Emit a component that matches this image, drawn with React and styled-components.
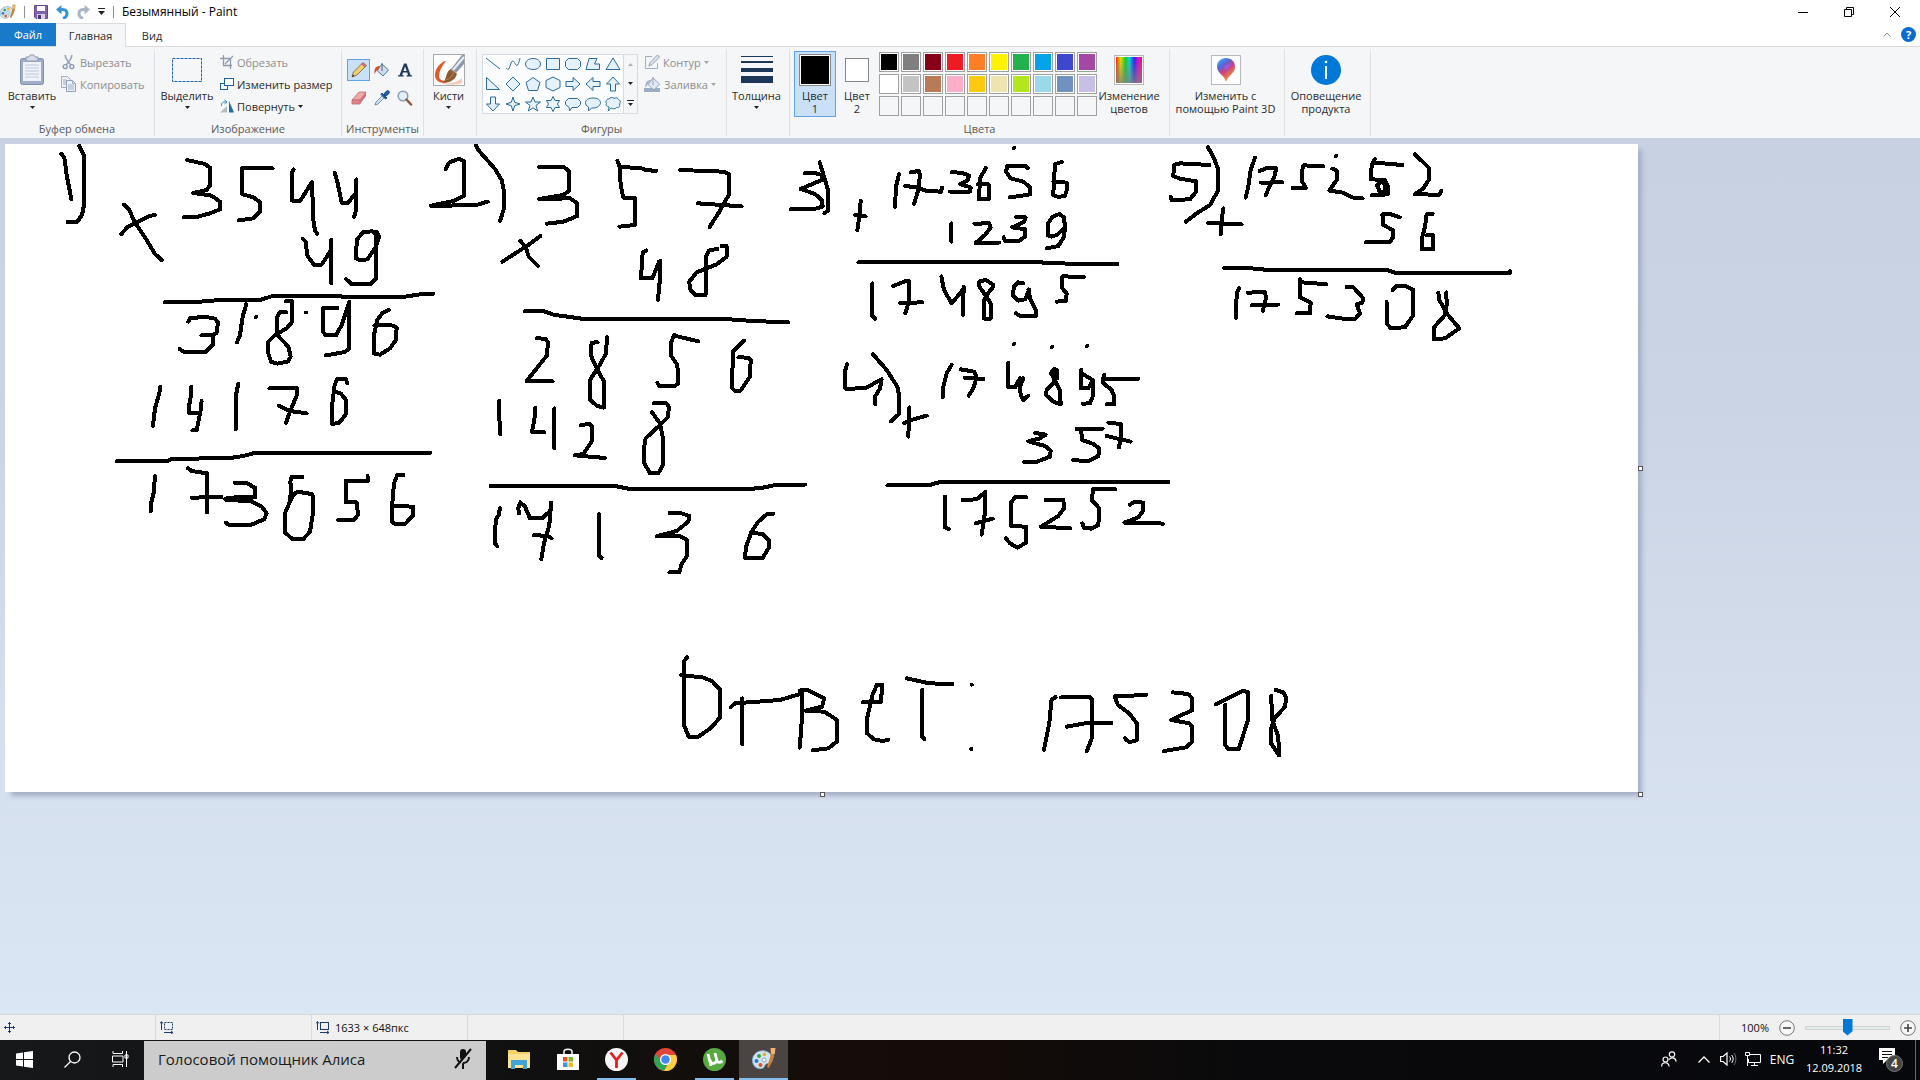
import React from "react";
import styled, { createGlobalStyle, css } from "styled-components";

const GlobalStyle = createGlobalStyle`
  *, *::before, *::after { box-sizing: border-box; }
  html, body, #root { height: 100%; margin: 0; }
  body {
    overflow: hidden;
    font-family: "Open Sans", "Noto Sans", sans-serif;
    font-size: 11px;
    line-height: 13px;
    color: #2b2b2b;
  }
  button, input { font: inherit; color: inherit; }
  button { padding: 0; border: 0; background: none; white-space: nowrap; }
  svg { display: block; flex: none; }
`;

/* ---------- window frame ---------- */

const Window = styled.div`
  display: flex;
  flex-direction: column;
  height: 100vh;
  background: #fff;
`;

const TitleBar = styled.header`
  display: flex;
  align-items: center;
  height: 23px;
  padding-right: 2px;
  background: #fff;
`;

const QuickAccess = styled.div`
  display: flex;
  align-items: center;
  gap: 8px;
`;

const QuickButton = styled.button`
  display: grid;
  place-items: center;
`;

const Divider = styled.span`
  width: 1px;
  height: 12px;
  margin-right: 1px;
  background: #8f8f8f;
`;

const Title = styled.h1`
  margin: 0 0 0 7px;
  flex: 1;
  font-size: 12px;
  font-weight: 400;
  color: #000;
`;

const WindowButton = styled.button`
  display: grid;
  place-items: center;
  width: 46px;
  height: 20px;
`;

const TabRow = styled.nav`
  display: flex;
  height: 24px;
  border-bottom: 1px solid #dadbdc;
`;

const Tab = styled.button`
  width: ${(p) => p.$width}px;
  height: 24px;
  ${(p) =>
    p.$kind === "file" &&
    css`
      height: 23px;
      background: #1979ca;
      color: #fff;
    `}
  ${(p) =>
    p.$kind === "current" &&
    css`
      background: #f5f6f7;
      border: solid #dadbdc;
      border-width: 1px 1px 0 0;
    `}
`;

const TabTools = styled.div`
  display: flex;
  align-items: center;
  gap: 10px;
  margin-left: auto;
  padding-right: 4px;
`;

/* ---------- ribbon ---------- */

const Ribbon = styled.div`
  display: flex;
  height: 91px;
  padding: 2px 0;
  background: #f5f6f7;
`;

const Group = styled.section`
  display: flex;
  flex-direction: column;
  justify-content: space-between;
  width: ${(p) => p.$width}px;
  border-right: 1px solid #e0e1e3;
`;

const GroupBody = styled.div`
  display: flex;
  gap: ${(p) => p.$gap || 0}px;
  padding: 2px ${(p) => p.$pad || 0}px 0;
  ${(p) =>
    p.$center &&
    css`
      justify-content: center;
      padding-right: 3px;
    `}
`;

const GroupName = styled.h2`
  margin: 0 0 1px;
  font-size: 11px;
  font-weight: 400;
  line-height: 13px;
  text-align: center;
  color: #5a5a5a;
`;

const BigButton = styled.button`
  display: flex;
  flex-direction: column;
  align-items: center;
  width: ${(p) => p.$width}px;
  height: 66px;
  padding-top: 1px;
  border: 1px solid ${(p) => (p.$on ? "#62a2e4" : "transparent")};
  background: ${(p) => (p.$on ? "#c9e0f7" : "transparent")};
  & > svg { margin-top: 4px; }
`;

const BigIcon = styled.span`
  display: grid;
  flex: none;
  place-items: center;
  height: 34px;
  margin-bottom: 2px;
`;

const BigText = styled.span`
  flex: none;
  line-height: 13px;
  white-space: pre;
`;

const Rows = styled.div`
  display: flex;
  flex-direction: column;
  margin-left: ${(p) => p.$indent || 0}px;
`;

const RowButton = styled.button`
  display: flex;
  align-items: center;
  gap: 3px;
  height: 22px;
  color: ${(p) => (p.disabled ? "#8d8d8d" : "#2b2b2b")};
`;

const ToolGrid = styled.div`
  display: grid;
  grid-template-columns: repeat(3, 23px);
  grid-auto-rows: 22px;
  row-gap: 6px;
  padding-top: 8px;
`;

const ToolButton = styled.button`
  display: grid;
  place-items: center;
  border: 1px solid ${(p) => (p.$on ? "#62a2e4" : "transparent")};
  background: ${(p) => (p.$on ? "#c9e0f7" : "transparent")};
`;

const ShapeBox = styled.div`
  display: flex;
  height: 60px;
  margin-top: 3px;
  border: 1px solid #d5dbe2;
  background: #fbfcfd;
`;

const ShapeGrid = styled.div`
  display: grid;
  grid-template-columns: repeat(7, 20px);
  grid-auto-rows: 20px;
  align-content: center;
`;

const ShapeScroll = styled.div`
  display: grid;
  grid-template-rows: repeat(3, 1fr);
  width: 14px;
  border-left: 1px solid #d5dbe2;
  background: #f5f6f7;
`;

const CellButton = styled.button`
  display: grid;
  place-items: center;
`;

const Chip = styled.span`
  width: ${(p) => p.$size}px;
  height: ${(p) => p.$size}px;
  border: 1px solid #868686;
  background: ${(p) => p.$color};
  box-shadow: inset 0 0 0 1px #fff;
`;

const Palette = styled.div`
  display: grid;
  grid-template-columns: repeat(10, 20px);
  grid-auto-rows: 20px;
  gap: 2px;
  padding: 1px 0 0 1px;
`;

const Swatch = styled.button`
  border: 1px solid #a0a0a0;
  background: ${(p) => p.$color || "#f5f6f7"};
  box-shadow: ${(p) => (p.$color ? "inset 0 0 0 1px #fff" : "none")};
`;

const FramedPicture = styled.span`
  display: grid;
  place-items: center;
  width: 30px;
  height: 30px;
  border: 1px solid #b9b9b9;
  background: #fff;
`;

const Spectrum = styled.span`
  width: 26px;
  height: 26px;
  background: linear-gradient(to bottom, transparent, #808080cc),
    linear-gradient(to right, #ff2a00, #e8e000 18%, #12d020 36%, #00d8d8 52%, #2020f0 70%, #e000e0 85%, #ff1040);
`;

/* ---------- work area ---------- */

const WorkArea = styled.main`
  flex: 1;
  min-height: 0;
  overflow: hidden;
  padding: 6px 0 0 5px;
  background: linear-gradient(#c8d1e1, #cad4e4 30%, #d5dfee 70%, #dbe6f4);
`;

const Sheet = styled.div`
  position: relative;
  width: 1633px;
  background: #fff;
  box-shadow: 5px 5px 5px -1px #a5afc4;
`;

const Handle = styled.span`
  position: absolute;
  left: ${(p) => p.$left};
  top: ${(p) => p.$top};
  width: 5px;
  height: 5px;
  border: 1px solid #555;
  background: #fff;
`;

/* ---------- status bar ---------- */

const StatusBar = styled.footer`
  display: flex;
  align-items: stretch;
  height: 26px;
  border-top: 1px solid #d7d7d7;
  background: #f0f0f0;
  color: #111;
`;

const StatusCell = styled.div`
  display: flex;
  align-items: center;
  gap: 5px;
  width: ${(p) => p.$width}px;
  padding-left: 4px;
  border-right: 1px solid #d9d9d9;
`;

const Zoom = styled.div`
  display: flex;
  align-items: center;
  gap: 10px;
  margin-left: auto;
  padding: 0 4px 0 21px;
  border-left: 1px solid #d9d9d9;
`;

const ZoomTrack = styled.input`
  appearance: none;
  width: 85px;
  height: 16px;
  margin: 0;
  background: transparent;
  &::-webkit-slider-runnable-track {
    height: 4px;
    border: 1px solid #d0d6d6;
    background: #e7eaea;
  }
  &::-webkit-slider-thumb {
    appearance: none;
    width: 10px;
    height: 17px;
    margin-top: -8px;
    background: #0078d7;
    clip-path: polygon(0 0, 100% 0, 100% 75%, 50% 100%, 0 75%);
  }
`;

/* ---------- taskbar ---------- */

const Taskbar = styled.div`
  display: flex;
  height: 40px;
  background: linear-gradient(90deg, #16181a, #101010 28%, #140d09 42%, #140c08 50%, #0a0a0c 65%, #07080c);
  color: #fff;
`;

const TaskButton = styled.button`
  position: relative;
  display: grid;
  place-items: center;
  width: ${(p) => p.$width || 49}px;
  height: 40px;
  padding-bottom: 2px;
  background: ${(p) => (p.$on ? "#4a4443" : "transparent")};
  ${(p) =>
    p.$open &&
    css`
      &::after {
        content: "";
        position: absolute;
        bottom: 0;
        left: ${p.$on ? 0 : 5}px;
        right: ${p.$on ? 0 : 5}px;
        height: 2px;
        background: #84bdec;
      }
    `}
`;

const Search = styled.label`
  display: flex;
  align-items: center;
  width: 342px;
  margin: 1px 8px 0 0;
  padding: 0 14px 3px 14px;
  background: #ccc;
`;

const SearchInput = styled.input`
  flex: 1;
  min-width: 0;
  padding: 0;
  border: 0;
  outline: 0;
  background: none;
  font-size: 15px;
  &::placeholder { color: #1b1b1b; opacity: 1; }
`;

const Language = styled.span`
  font-size: 12px;
`;

const Tray = styled.div`
  display: flex;
  align-items: center;
  margin-left: auto;
`;

const Clock = styled.div`
  width: 76px;
  padding: 0 4px 2px 0;
  text-align: center;
  line-height: 18px;
`;

const TrayEdge = styled.span`
  width: 5px;
  height: 40px;
  margin-left: 8px;
  border-left: 1px solid #666;
`;

/* ---------- icons ---------- */

const Svg = ({ w = 16, h = w, vw = w, vh = h, children, ...rest }) => (
  <svg width={w} height={h} viewBox={`0 0 ${vw} ${vh}`} fill="none" aria-hidden="true" {...rest}>
    {children}
  </svg>
);

const Arrow = ({ color = "#222" }) => (
  <Svg w={5} h={3}>
    <path d="M0 0h5L2.500 3z" fill={color} />
  </Svg>
);

const PaintIcon = ({ size = 16 }) => (
  <Svg w={size} vw={24} vh={24}>
    <path d="M13 4C6 2.500 0 7.500 .5 14c.4 6 5.500 8.500 9.500 7.500 3-.8 2-3 4-4.500 2-1.300 5 .5 6-3C21 9 18 5 13 4z" fill="#cfe3f1" stroke="#7fa9c6" />
    <circle cx="7" cy="9" r="2" fill="#3f9b44" />
    <circle cx="12.500" cy="7.500" r="1.800" fill="#e2b02b" />
    <circle cx="4.500" cy="14" r="2" fill="#2e76c4" />
    <circle cx="8.500" cy="18" r="2" fill="#d5532e" />
    <circle cx="12" cy="13" r="2" fill="#fff" stroke="#7fa9c6" />
    <path d="M19 1h4l-1 9-5 11-2-1 3.500-11z" fill="#c9803a" />
    <path d="M18.500 1h5l-.7 6h-3.600z" fill="#f0b66c" />
  </Svg>
);

const SaveIcon = () => (
  <Svg w={14} h={14}>
    <path d="M.5.500h13v13H2L.5 12z" fill="#8263ad" stroke="#65478f" />
    <path d="M3 1h8v5H3z" fill="#fff" />
    <path d="M3 9h8v5H3z" fill="#d8d0e4" />
    <path d="M4 10h3v4H4z" fill="#4e3675" />
  </Svg>
);

const UndoIcon = ({ color, flip }) => (
  <Svg w={13} h={14}>
    <g transform={flip ? "translate(13 0) scale(-1 1)" : undefined}>
      <path d="M3 5c4.500-1 8-.5 8 3.500 0 2.500-1.500 4-4 5" stroke={color} strokeWidth="3" />
      <path d="M0 4.500 5.500 0v9.500z" fill={color} />
    </g>
  </Svg>
);

const PasteIcon = () => (
  <Svg w={26} h={32}>
    <rect x="1.500" y="4.500" width="23" height="26" rx="2" fill="#9eacc5" stroke="#8190ad" />
    <path d="M4 8h18v19H4z" fill="#eff3f9" />
    <path d="M6 11h14M6 14h14M6 17h14M6 20h14M6 23h14" stroke="#bdc9dc" />
    <path d="M7 3h3c0-3 6-3 6 0h3v4H7z" fill="#d6dde8" stroke="#8998b3" />
  </Svg>
);

const CutIcon = () => (
  <Svg w={17} h={16}>
    <path d="M5 1c1 5 3 7 6 10M12 1c-1 5-3 7-6 10" stroke="#98a6bf" strokeWidth="1.600" />
    <circle cx="5.200" cy="12.600" r="2" stroke="#8797b5" strokeWidth="1.300" />
    <circle cx="11.800" cy="12.600" r="2" stroke="#8797b5" strokeWidth="1.300" />
  </Svg>
);

const CopyIcon = () => (
  <Svg w={17} h={16}>
    <path d="M1.500.500h6l3 3v8h-9z" fill="#eef2f8" stroke="#9fadc5" />
    <path d="M6.500 4.500h6l3 3v8h-9z" fill="#eef2f8" stroke="#8f9fbb" />
    <path d="M12.500 4.500v3h3M3 4h3M3 6h3M3 8h3M8 9h6M8 11h6M8 13h6" stroke="#9fadc5" />
  </Svg>
);

const SelectIcon = () => (
  <Svg w={32} h={26}>
    <rect x="1.500" y="1.500" width="29" height="23" stroke="#1b5fa5" strokeDasharray="3 1" />
  </Svg>
);

const CropIcon = () => (
  <Svg w={14} h={14}>
    <path d="M3.500 0v10.500H12M0 3.500h10.500V14M5 9l8-8" stroke="#8e9ab0" strokeWidth="1.300" />
  </Svg>
);

const ResizeIcon = () => (
  <Svg w={14} h={14}>
    <rect x=".5" y="6.500" width="7" height="6" fill="#fff" stroke="#1b5fa5" />
    <rect x="4.500" y="1.500" width="9" height="7" fill="#fff" stroke="#1b5fa5" />
  </Svg>
);

const RotateIcon = () => (
  <Svg w={14} h={14}>
    <path d="M0 13.500 7 7v6.500z" fill="#b5bcc4" />
    <path d="M9 2l5 11.500H9z" fill="#1f6fa6" />
    <path d="M1.500 7C1 4 3 2.500 6 3M4.500.800 7 3 4.500 5" stroke="#3d8ccb" />
  </Svg>
);

const PencilIcon = () => (
  <Svg w={16}>
    <path d="M1 15l1.500-5L11 1.500l3.500 3L6 13z" fill="#f0cd70" stroke="#74613a" strokeWidth=".8" />
    <path d="M10.500 2l1.500-1.500 3.500 3L14 5z" fill="#de7b70" stroke="#8c4d46" strokeWidth=".6" />
    <path d="M1 15l.8-2.500 1.700 1.600z" fill="#333" />
  </Svg>
);

const FillIcon = ({ muted }) => (
  <Svg w={17} h={16}>
    {muted ? <path d="M0 12h16v4H0z" fill="#9eacc4" /> : null}
    <path d="M9 2l6.500 6L10 14 4 8.500z" fill={muted ? "#e3e8f0" : "#cddceb"} stroke={muted ? "#95a4be" : "#56789b"} />
    <path d="M9 9V1" stroke={muted ? "#95a4be" : "#46678c"} />
    <path d="M7 4C3 4 1 6 1.500 12 3 10 3 8 5.500 7.500z" fill={muted ? "#a7b4ca" : "#d6502c"} />
  </Svg>
);

const TextIcon = () => (
  <Svg w={14} h={14}>
    <path d="M6 .5h2.500l4 11.500 1.500.500v1H8.500v-1l1.500-.5-.8-2.500H5L4.200 12l1.600.500v1H0v-1l1.600-.5zM5.500 8h3.200L7.100 3.500z" fill="#223b5c" />
  </Svg>
);

const EraserIcon = () => (
  <Svg w={16} h={14}>
    <path d="M1 9l7-8h7l-6 8z" fill="#f0a9a9" stroke="#c06c70" strokeWidth=".8" />
    <path d="M1 9h8v4H1z" fill="#e28387" stroke="#c06c70" strokeWidth=".8" />
    <path d="M9 9l6-8v4l-6 8z" fill="#d36e76" />
  </Svg>
);

const PickerIcon = () => (
  <Svg w={16}>
    <path d="M1 15l1-3 6.500-6.500 2 2L4 14z" fill="#cfe2f1" stroke="#5b7c9d" strokeWidth=".8" />
    <path d="M8 3l5 5-1.500 1L7 4.500zM10 4l2.500-3c2-1 3.500.5 2.500 2.500L12 6z" fill="#235ea5" stroke="#1b4d8b" />
  </Svg>
);

const MagnifierIcon = () => (
  <Svg w={16}>
    <circle cx="6" cy="6" r="4.800" fill="#e3eef8" stroke="#8c9cae" strokeWidth="1.500" />
    <path d="M9.500 9.500 14 14.500" stroke="#8a5a3e" strokeWidth="2.500" strokeLinecap="round" />
  </Svg>
);

const BrushIcon = () => (
  <Svg w={32}>
    <rect x=".5" y=".5" width="31" height="31" fill="#fdfdfd" stroke="#a9a9a9" />
    <path d="M12 7C4 10 0 20 3 25c3 5 11 5 16 1-7 2-13 1-13-4 0-5 3-10 7-15z" fill="#e2562a" />
    <path d="M5 27c6 4 18 3 24-3v5c-6 2-18 3-24-2z" fill="#f5c9b6" />
    <path d="M31 1v9l-8 9-5-4L29 1z" fill="#8b98aa" />
    <path d="M31 3 20 16" stroke="#e9eef4" strokeWidth="2" />
    <path d="M18 15l6 5c-2 6-7 9-14 8 4-2 2-10 8-13z" fill="#8b5a32" />
    <path d="M18 16l3 2c-2 4-4 7-8 8" stroke="#b98556" />
  </Svg>
);

const OutlineIcon = () => (
  <Svg w={16}>
    <path d="M8 2.500H1.500v12h12V9" stroke="#a2aec4" />
    <path d="M5 12l1-3.500L13.500 1l2 2L8 10.500z" fill="#dfe5ee" stroke="#8f9eb8" />
  </Svg>
);

const ThicknessIcon = () => (
  <Svg w={32} h={28}>
    <path d="M0 0h32v1H0zM0 5h32v2H0zM0 12h32v4H0zM0 20h32v7H0z" fill="#1d3557" />
  </Svg>
);

const Paint3DIcon = () => (
  <Svg w={18} h={24}>
    <defs>
      <linearGradient id="drop" x1="0" y1="0" x2=".6" y2="1">
        <stop offset="0" stopColor="#2fd0f0" />
        <stop offset=".35" stopColor="#5566e0" />
        <stop offset=".6" stopColor="#d0407c" />
        <stop offset="1" stopColor="#f5a623" />
      </linearGradient>
    </defs>
    <path d="M9 0c5 0 9 3.500 9 8.500C18 16 12 16 9 24 8 17 0 16 0 8.500 0 3.500 4 0 9 0z" fill="url(#drop)" />
    <path d="M7 9c3-3 7-3 9-1-3-1-5 1-7 5z" fill="#9a5be0" />
  </Svg>
);

const InfoIcon = () => (
  <Svg w={30}>
    <circle cx="15" cy="15" r="15" fill="#0078d7" />
    <path d="M15 11v13" stroke="#fff" strokeWidth="2" />
    <circle cx="15" cy="7" r="1.300" fill="#fff" />
  </Svg>
);

const shapePaths = {
  "Линия": "M1 2l14 11",
  "Кривая": "M1 12c3 4 4-2 5-5 2-5 4 1 5 2 2 2 3-3 4-7",
  "Овал": "M8 2.500c4.500 0 7.500 2.500 7.500 5.500s-3 5.500-7.500 5.500S.5 11 .5 8 3.500 2.500 8 2.500z",
  "Прямоугольник": "M1.500 2.500h13v11h-13z",
  "Скруглённый прямоугольник": "M3.500 2.500h9l3 3v5l-3 3h-9l-3-3v-5z",
  "Многоугольник": "M4 2.500h8l-2.500 5.500h5v5.500H1z",
  "Треугольник": "M8 2l7 11.500H1z",
  "Прямоугольный треугольник": "M1.500 1.500v12h13z",
  "Ромб": "M8 1l7 7-7 7-7-7z",
  "Пятиугольник": "M8 1.500l7 5-2.500 8h-9L1 6.500z",
  "Шестиугольник": "M8 1l7 3.500v7L8 15l-7-3.500v-7z",
  "Стрелка вправо": "M1 5.500h7V1.500L15 8l-7 6.500v-4H1z",
  "Стрелка влево": "M15 5.500H8V1.500L1 8l7 6.500v-4h7z",
  "Стрелка вверх": "M5.500 15V8h-4L8 1l6.500 7h-4v7z",
  "Стрелка вниз": "M5.500 1v7h-4L8 15l6.500-7h-4V1z",
  "Звезда с 4 концами": "M8 1l1.700 5.300L15 8l-5.300 1.700L8 15l-1.700-5.300L1 8l5.300-1.700z",
  "Звезда с 5 концами": "M8 1l2 5h5.500l-4.500 3.500 1.700 5.500L8 11.800 3.300 15 5 9.500.5 6H6z",
  "Звезда с 6 концами": "M8 .5l2 4h4.500L12.500 8l2 3.500H10L8 15.500l-2-4H1.500l2-3.500-2-3.500H6z",
  "Прямоугольная выноска": "M3.500 2.500h9l3 3v3l-3 3H7L4.500 15l-.3-3.500L.5 8.500v-3z",
  "Овальная выноска": "M8 2c4.500 0 7.500 2 7.500 4.700S12.500 12 8 12H6.500L3.500 15v-4C1.500 10 .5 8.500.500 6.700.500 4 3.500 2 8 2z",
  "Выноска-облако": "M4 3c1-2 4-2 5-.5 2-1.500 4-.5 4.500 1 2.500 1 2 3.500 1 4.500 1 2.500-1 4-3 3.500-1.500 2-4 1.500-4.500.500-2 .7-2 .5-3.500 3l.5-4C1.500 10.500.500 9 1.500 7.500 0 5.500 1.500 3 4 3z",
};

const WindowsIcon = () => (
  <Svg w={17} h={17}>
    <path d="M0 2.500 7 1.500V8H0zM8 1.300 17 0v8H8zM0 9h7v6.500l-7-1zM8 9h9v8l-9-1.300z" fill="#fff" />
  </Svg>
);

const SearchIcon = () => (
  <Svg w={17} h={17}>
    <circle cx="10.500" cy="6.500" r="5.500" stroke="#fff" strokeWidth="1.300" />
    <path d="M6.500 10.500.5 16.500" stroke="#fff" strokeWidth="1.300" />
  </Svg>
);

const TaskViewIcon = () => (
  <Svg w={17} h={16}>
    <path d="M1 0v2.500h9.500V0M1 16v-2.500h9.500V16M.500 5h10.500v6H.500zM14.500 0v16M13 4h3v3h-3z" stroke="#fff" />
  </Svg>
);

const MutedMicIcon = () => (
  <Svg w={18} h={22}>
    <rect x="6" y="1" width="6" height="11" rx="3" fill="#111" />
    <path d="M3 9c0 8 12 8 12 0M9 15v6" stroke="#111" strokeWidth="2" />
    <path d="M18 1.500 2 21.500" stroke="#ccc" strokeWidth="2" />
    <path d="M17 1 1 20" stroke="#111" strokeWidth="2" />
  </Svg>
);

const ExplorerIcon = () => (
  <Svg w={22} h={19}>
    <path d="M0 0h8l2 2h12v16H0z" fill="#f5cf67" />
    <path d="M0 4h22v14H0z" fill="#fbe294" />
    <path d="M3 19v-9h16v9h-4v-4H7v4z" fill="#3fa4d8" />
  </Svg>
);

const StoreIcon = () => (
  <Svg w={22} h={23}>
    <path d="M7 7V3.500c0-3 8-3 8 0V7" stroke="#fff" strokeWidth="1.500" />
    <path d="M0 6h22v16H0z" fill="#fff" />
    <path d="M6 9h4.500v4.500H6z" fill="#e8502b" />
    <path d="M11.500 9H16v4.500h-4.500z" fill="#7eb72b" />
    <path d="M6 14.500h4.500V19H6z" fill="#2d9fe0" />
    <path d="M11.500 14.500H16V19h-4.500z" fill="#f3b52a" />
  </Svg>
);

const YandexIcon = () => (
  <Svg w={23}>
    <circle cx="11.500" cy="11.500" r="11.500" fill="#f5f5f5" />
    <path d="M5.500 4.500 11.500 12l6-7.500M11.500 11.500V20" stroke="#e01f1f" strokeWidth="2.800" />
  </Svg>
);

const ChromeIcon = () => (
  <Svg w={23}>
    <circle cx="11.500" cy="11.500" r="11.500" fill="#e0453a" />
    <path d="M1.500 5.800A11.500 11.500 0 0 0 10 22.900l5.500-9-8 0z" fill="#33a457" />
    <path d="M22 7H11.500l5 4-6.500 11.900A11.500 11.500 0 0 0 22 7z" fill="#fbd03f" />
    <circle cx="11.500" cy="11.500" r="5.500" fill="#fff" />
    <circle cx="11.500" cy="11.500" r="4.300" fill="#4587ee" />
  </Svg>
);

const TorrentIcon = () => (
  <Svg w={23}>
    <circle cx="11.500" cy="11.500" r="11.500" fill="#58a942" />
    <path d="M5 6l3 12M7 12c1 5 7 4 6.500-1L12 5M13.500 11c.5 4 3 4 6 2" stroke="#fff" strokeWidth="2.800" />
  </Svg>
);

const PeopleIcon = () => (
  <Svg w={16}>
    <g stroke="#fff" strokeWidth="1.200">
      <circle cx="11" cy="3.500" r="2.700" />
      <circle cx="4.500" cy="8.500" r="2.500" />
      <path d="M.6 15.500c0-5 7.500-5 7.500 0M8 8.500c3-3 7-1.500 7 2" />
    </g>
  </Svg>
);

const SoundIcon = () => (
  <Svg w={17} h={14}>
    <path d="M.6 4.500h2.500L7 1v12L3.100 9.500H.600z" stroke="#fff" strokeWidth="1.200" />
    <path d="M9.500 4.500c1.300 1.500 1.300 3.500 0 5M11.700 3c2 2.500 2 5.500 0 8" stroke="#fff" />
    <path d="M14 1c2.500 3.500 2.500 8.500 0 12" stroke="#777" />
  </Svg>
);

const NetworkIcon = () => (
  <Svg w={16} h={14}>
    <path d="M5 2.500h10.500v8h-12V7M9.500 10.500v3M6 13.500h7M.5.500h4v3h-4zM2.500 3.500V14" stroke="#fff" />
  </Svg>
);

const NoticeIcon = () => (
  <Svg w={26} h={26}>
    <path d="M1 2h16v12H9l-4 4v-4H1z" fill="#fff" />
    <path d="M4 5.500h10M4 8.500h10M4 11.500h6" stroke="#111" />
    <circle cx="16.500" cy="17.500" r="8" fill="#444" stroke="#777" />
    <text x="16.500" y="22" textAnchor="middle" fontSize="12" fontWeight="600" fill="#fff">4</text>
  </Svg>
);

const RoundIcon = ({ plus }) => (
  <Svg w={16}>
    <circle cx="8" cy="8" r="7.300" fill="#f7f7f7" stroke="#777" />
    <path d={plus ? "M4 8h8M8 4v8" : "M4 8h8"} stroke="#444" strokeWidth="1.600" />
  </Svg>
);

/* ---------- pencil strokes on the sheet ---------- */

const drawings = [
  {
    at: [40, 140], scale: [3, 3],
    dots: [[648, 531], [798, 518]],
    lines: [
      "64,42 73,52 80,105 94,177",
      "118,18 132,45 132,195 126,225 112,245 83,246",
      "252,194 266,207 285,247 320,300 345,342 365,360", "345,225 327,228 285,250 262,262 244,282",
      "441,60 495,72 511,84 511,135 500,150 460,159 515,167 540,185 540,208 510,220 470,231 432,232",
      "698,85 606,85 606,162 640,172 660,187 660,215 640,235 596,241",
      "761,88 756,96 756,182 781,182 816,126 820,240 825,272 832,281",
      "884,99 892,125 905,188 925,188 942,165", "949,118 947,215 942,231",
      "788,296 797,305 802,347 822,374 845,374 870,335", "874,300 874,430",
      "1008,282 998,274 970,276 952,297 948,330 948,355 960,361 982,358 1005,325 1018,290 1010,275",
      "1008,285 1008,415 992,432 935,432 919,418",
      "374,487 470,486 540,480 660,480 695,469 1095,470 1140,463 1180,461",
      "445,545 450,535 495,530 525,536 534,548 530,578 518,586 484,586", "518,586 518,615 497,636 432,636 419,627",
      "619,492 608,530 600,585 591,607",
      "738,484 756,484 757,545 740,565 705,585 685,605 685,640 693,665 712,671 745,664 752,650 745,620 712,585 712,530 718,517 738,517",
      "893,504 850,504 848,575 858,586 888,586 905,555 928,486 928,625 915,636 858,646",
      "1047,510 1028,518 1012,540 1003,580 1001,640 1020,644 1050,625 1068,600 1070,562 1055,556 1003,556",
    ],
  },
  {
    at: [100, 360], scale: [3, 3], dots: [],
    lines: [
      "181,80 178,100 165,145 159,197",
      "274,80 274,100 266,145 268,160 298,158", "305,123 302,150 290,210 277,211",
      "415,71 408,105 408,207",
      "508,85 592,85 592,102 572,150 558,188", "536,137 570,153 620,160",
      "742,70 738,58 712,56 704,75 697,130 697,192 718,188 738,162 738,120 722,100 706,96",
      "50,304 200,304 215,296 385,295 430,288 463,279 990,279",
      "165,348 161,398 153,430 153,453",
      "264,325 275,333 321,340 321,457", "276,413 364,411",
      "405,368 440,369 466,384 466,412 376,419 455,424 485,440 500,460 492,478 452,495 385,494 378,488", "376,416 420,410 466,412",
      "608,351 575,351 571,365 573,385 570,425", "568,430 580,405 592,395 635,402 639,410 638,465 630,515 610,537 577,537 556,518 554,462 570,425",
      "803,348 803,364 737,362 737,427 770,427 774,465 760,481 715,480",
      "910,345 892,345 882,370 877,430 877,486 885,492 915,492 940,465 940,440 880,438",
    ],
  },
  {
    at: [420, 145], scale: [3, 3], dots: [],
    lines: [
      "77,72 88,52 118,41 131,48 132,152 100,168 33,182 165,181 203,170",
      "168,0 175,15 225,72 245,105 252,140 252,190 240,228",
      "358,66 430,65 446,77 446,138 430,150 358,162 450,160 472,175 472,213 430,230 381,236",
      "592,47 599,65 602,120 610,158 646,160 645,240 598,245", "599,67 660,68 680,76 708,77",
      "781,75 910,80 928,88 926,150 895,205 869,246", "834,175 965,184",
      "361,273 325,300 247,350", "301,288 318,308 326,335 354,363",
      "679,316 668,322 663,400 697,400 717,350", "721,348 720,400 714,464",
      "892,312 868,316 857,335 857,450 825,450 810,432 808,410 830,382 890,358 920,335 920,303 905,303",
      "315,498 370,498 400,509 485,521 900,521 1000,528 1104,532",
    ],
  },
  {
    at: [470, 330], scale: [3, 3], dots: [],
    lines: [
      "200,25 225,26 233,35 232,75 208,105 170,153 248,154",
      "383,37 365,38 362,75 380,115 402,155 402,233 382,228 360,210 360,150 392,100 408,70 411,22",
      "613,14 602,40 602,75 622,105 625,160 612,169 567,168 562,158", "613,17 685,34",
      "822,32 788,65 787,175 797,184 812,182 840,140 842,90 835,83 805,82",
      "88,212 88,265 91,312",
      "196,233 193,270 186,305 223,307", "253,235 253,354",
      "332,286 358,281 367,290 367,332 340,372 315,376 405,384",
      "551,220 590,220 596,230 595,260 570,285 527,325 522,355 523,400 540,430 565,430 578,405 578,320 570,280 546,247",
      "62,468 430,467 480,477 840,477 885,472 920,464 1005,464",
      "90,534 86,555 77,570 75,640 82,649",
      "147,550 145,535 151,517 165,530 180,565 218,564 243,540", "243,518 238,585 222,640 214,688", "191,616 230,617 245,625",
      "387,553 387,678 395,684",
      "599,549 632,549 658,558 655,575 620,603 560,619 630,618 651,630 650,680 635,702 628,726 598,727",
      "909,551 890,553 865,575 845,605 828,650 825,684 878,684 898,650 896,630 878,612 842,608",
    ],
  },
  {
    at: [780, 140], scale: [3, 3],
    dots: [[702, 24], [702, 612], [816, 621], [921, 618]],
    lines: [
      "75,99 105,99 125,105 130,118 62,147 105,162 125,180 128,200 100,208 32,208",
      "119,67 132,110 144,150 144,212 133,220",
      "242,182 240,215 232,270", "225,225 257,229",
      "357,102 348,140 345,200",
      "392,97 416,93 420,105 415,150 402,192", "376,138 410,142 440,153 483,155 486,143",
      "515,97 545,98 568,107 562,122 540,132 572,142 570,155 510,155",
      "618,83 600,115 597,178 626,178 626,133 594,133",
      "743,84 735,77 682,77 678,95 692,115 730,125 750,142 750,163 725,167 690,172",
      "845,66 826,72 822,110 820,165 835,171 855,167 862,145 860,128 820,124",
      "514,250 514,305",
      "583,251 628,250 632,262 615,285 587,309 657,308",
      "708,231 737,232 733,245 697,262 735,268 735,290 718,302 675,302 671,292",
      "855,262 852,232 838,222 818,230 803,252 803,285 815,290 832,284 855,262 852,290 835,318 800,325",
      "235,367 785,367 800,370 1012,372",
      "277,430 277,528 285,536",
      "340,438 380,422 388,424 388,480 376,520", "361,489 427,487",
      "484,409 492,450 515,490 548,450", "551,440 549,525",
      "640,435 618,420 598,424 598,440 618,468 632,490 632,536 612,536 612,480 620,465 640,440",
      "730,430 715,427 702,440 698,465 715,482 735,478 748,450", "745,448 752,480 768,510 768,528 720,528 708,520",
      "912,411 847,409 847,445 860,460 858,482 830,485",
      "201,673 196,690 196,746 255,745 305,718 300,745 285,770 286,792",
      "279,643 320,690 352,740 357,765 357,822 333,844",
      "388,802 385,890", "373,849 400,838 440,827",
      "515,675 500,700 490,740 488,772",
      "542,688 582,695 590,712 580,745 566,767", "555,714 610,717",
      "685,668 684,740 705,742 720,715", "730,715 720,740 722,765 730,780 745,767",
      "823,686 812,700 832,715 830,690 815,700 825,725 800,750 798,765 820,785 842,793 840,750 825,722",
      "903,690 903,745 925,745 938,720 905,700", "938,722 938,770 930,790 908,791",
      "973,705 968,728 995,750 1003,770 1003,793 980,793", "968,716 1075,716",
      "766,879 797,884 780,895 745,904 795,918 812,932 810,950 768,966 733,966",
      "890,867 968,866", "903,870 907,900 940,912 958,925 955,948 925,964 880,960",
      "985,848 1023,852 1023,890 1017,922", "980,888 1052,905",
      "322,1036 445,1036 480,1026 1165,1026",
      "495,1070 495,1162 507,1167",
      "548,1080 590,1078 616,1056 616,1110 605,1184", "587,1150 638,1136",
      "738,1072 705,1072 693,1088 693,1158 738,1160 738,1208 712,1223 690,1210 678,1195",
      "797,1080 850,1080 852,1105 835,1128 783,1160 870,1165",
      "1005,1048 940,1046 935,1080 958,1105 955,1155 935,1166 912,1163 907,1150",
      "1050,1094 1065,1085 1090,1088 1090,1112 1075,1132 1033,1148 1135,1148 1148,1152",
    ],
  },
  {
    at: [1150, 140], scale: [3, 3], dots: [[558, 48]],
    lines: [
      "178,75 90,70 72,75 70,108 90,116 138,124 138,155 120,178 65,180 62,170",
      "174,22 190,50 205,90 205,150 180,195 140,220 108,245",
      "220,205 215,240 212,282", "175,249 275,253",
      "315,53 302,90 295,140 287,173",
      "329,93 352,83 378,85 375,105 347,165", "333,128 396,127",
      "520,79 460,76 456,95 455,122 468,145 428,144",
      "547,86 560,92 560,120 538,152 575,157 610,173 638,175",
      "757,75 675,68 665,75 663,118 705,120 715,140 713,163 665,166", "675,57 665,75", "682,135 690,158 705,155 705,130 690,125 682,140",
      "795,43 838,85 836,120 820,145 795,163 868,164 874,152",
      "749,232 720,222 697,223 700,255 728,270 730,290 720,306 648,307",
      "848,222 830,223 825,260 817,290 815,327 850,327 850,286 830,286",
      "223,384 335,386 345,390 710,390 735,398 1079,399 1080,394",
      "267,444 260,460 258,534",
      "294,458 345,456 348,475 338,513", "305,496 384,494",
      "450,418 450,472 482,488 480,520 441,520", "450,427 475,428 528,433",
      "590,441 610,442 640,475 637,488 620,493 630,520 615,537 585,537 532,529",
      "728,450 740,438 765,437 790,450 790,525 765,562 722,564 710,550 710,486",
      "865,458 868,480 890,520 928,565 885,595 852,598 852,562 885,525 890,495 889,457",
    ],
  },
  {
    at: [660, 640], scale: [2.376, 3],
    dots: [[741, 134], [739, 327]],
    lines: [
      "64,52 57,65 57,255 68,290 90,291 120,265 143,232 143,150 125,125 105,113 50,105",
      "168,202 178,190 285,180 330,163", "195,175 195,312",
      "337,150 337,240 332,323", "332,152 350,150 390,175 385,200 345,212 390,215 421,240 420,305 400,325 363,331",
      "482,187 525,186 528,135 515,135 505,165 492,235 492,280 508,298 530,303 543,299",
      "586,115 640,130 695,132", "623,150 623,290 628,297",
      "940,171 930,180 925,250 912,330",
      "953,172 1020,170 1027,180 1026,295 1014,334", "966,260 1010,250 1072,249",
      "1155,165 1080,169 1088,195 1115,220 1133,250 1133,300 1115,307 1105,295",
      "1218,157 1255,162 1265,175 1265,210 1215,240 1258,250 1265,262 1265,305 1250,322 1197,333",
      "1320,193 1385,152 1398,157 1397,240 1375,328 1350,328 1343,315 1343,195",
      "1463,150 1482,158 1488,175 1485,200 1460,235 1452,265 1452,310 1471,346 1469,290 1455,240 1452,168",
    ],
  },
];

const Drawing = () => (
  <svg width="100%" viewBox="5 144 1633 648" role="img" aria-label="Рисунок" shapeRendering="crispEdges">
    {drawings.map(({ at, scale, lines, dots }) => (
      <g key={at.join()} transform={`translate(${at}) scale(${1 / scale[0]} ${1 / scale[1]})`}>
        {lines.map((points) => (
          <polyline
            key={points}
            points={points}
            fill="none"
            stroke="#000"
            strokeWidth="4"
            strokeLinecap="round"
            strokeLinejoin="round"
            vectorEffect="non-scaling-stroke"
          />
        ))}
        {dots.map(([x, y]) => (
          <ellipse key={`${x} ${y}`} cx={x} cy={y} rx={scale[0] * 2} ry={scale[1] * 2} fill="#000" />
        ))}
      </g>
    ))}
  </svg>
);

const colors = [
  "#000000", "#7f7f7f", "#880015", "#ed1c24", "#ff7f27", "#fff200", "#22b14c", "#00a2e8", "#3f48cc", "#a349a4",
  "#ffffff", "#c3c3c3", "#b97a57", "#ffaec9", "#ffc90e", "#efe4b0", "#b5e61d", "#99d9ea", "#7092be", "#c8bfe7",
  ...Array(10).fill(""),
];

const Big = ({ icon, text, width, arrow, ...rest }) => (
  <BigButton type="button" $width={width} {...rest}>
    <BigIcon>{icon}</BigIcon>
    <BigText>{text}</BigText>
    {arrow && <Arrow />}
  </BigButton>
);

const Row = ({ icon, text, arrow, ...rest }) => (
  <RowButton type="button" {...rest}>
    {icon}
    <span>{text}</span>
    {arrow && <Arrow color={rest.disabled ? "#a5a5a5" : "#222"} />}
  </RowButton>
);

export default function App() {
  return (
    <>
      <GlobalStyle />
      <Window>
        <TitleBar>
          <QuickAccess>
            <PaintIcon />
            <Divider />
            <QuickButton type="button" aria-label="Сохранить"><SaveIcon /></QuickButton>
            <QuickButton type="button" aria-label="Отменить"><UndoIcon color="#3a94d4" /></QuickButton>
            <QuickButton type="button" aria-label="Вернуть"><UndoIcon color="#a9b5c3" flip /></QuickButton>
            <QuickButton type="button" aria-label="Настройка панели">
              <Svg w={7} h={7}><path d="M0 0h7v1H0zM0 3h7L3.500 7z" fill="#222" /></Svg>
            </QuickButton>
            <Divider />
          </QuickAccess>
          <Title>Безымянный - Paint</Title>
          <WindowButton type="button" aria-label="Свернуть">
            <Svg w={10} h={10}><path d="M0 5.500h10" stroke="#000" /></Svg>
          </WindowButton>
          <WindowButton type="button" aria-label="Восстановить">
            <Svg w={10} h={10}><path d="M.5 2.500h7v7h-7zM2.500 2.500v-2h7v7h-2" stroke="#000" /></Svg>
          </WindowButton>
          <WindowButton type="button" aria-label="Закрыть">
            <Svg w={10} h={10}><path d="M0 0l10 10M10 0 0 10" stroke="#000" /></Svg>
          </WindowButton>
        </TitleBar>

        <TabRow>
          <Tab type="button" $width={56} $kind="file">Файл</Tab>
          <Tab type="button" $width={70} $kind="current">Главная</Tab>
          <Tab type="button" $width={52}>Вид</Tab>
          <TabTools>
            <button type="button" aria-label="Свернуть ленту">
              <Svg w={8} h={5}><path d="M.5 4.500 4 1l3.500 3.500" stroke="#8b8b8b" /></Svg>
            </button>
            <button type="button" aria-label="Справка">
              <Svg w={15}>
                <circle cx="7.500" cy="7.500" r="7.500" fill="#0a6cce" />
                <text x="7.500" y="12" textAnchor="middle" fontSize="11" fontWeight="700" fill="#fff">?</text>
              </Svg>
            </button>
          </TabTools>
        </TabRow>

        <Ribbon>
          <Group $width={155}>
            <GroupBody $pad={4}>
              <Big width={56} icon={<PasteIcon />} text="Вставить" arrow />
              <Rows>
                <Row disabled icon={<CutIcon />} text="Вырезать" />
                <Row disabled icon={<CopyIcon />} text="Копировать" />
              </Rows>
            </GroupBody>
            <GroupName>Буфер обмена</GroupName>
          </Group>

          <Group $width={187}>
            <GroupBody $pad={4}>
              <Big width={56} icon={<SelectIcon />} text="Выделить" arrow />
              <Rows $indent={5}>
                <Row disabled icon={<CropIcon />} text="Обрезать" />
                <Row icon={<ResizeIcon />} text="Изменить размер" />
                <Row icon={<RotateIcon />} text="Повернуть" arrow />
              </Rows>
            </GroupBody>
            <GroupName>Изображение</GroupName>
          </Group>

          <Group $width={82}>
            <GroupBody $pad={5}>
              <ToolGrid>
                <ToolButton type="button" aria-label="Карандаш" $on><PencilIcon /></ToolButton>
                <ToolButton type="button" aria-label="Заливка цветом"><FillIcon /></ToolButton>
                <ToolButton type="button" aria-label="Текст"><TextIcon /></ToolButton>
                <ToolButton type="button" aria-label="Ластик"><EraserIcon /></ToolButton>
                <ToolButton type="button" aria-label="Палитра"><PickerIcon /></ToolButton>
                <ToolButton type="button" aria-label="Масштаб"><MagnifierIcon /></ToolButton>
              </ToolGrid>
            </GroupBody>
            <GroupName>Инструменты</GroupName>
          </Group>

          <Group $width={53}>
            <GroupBody $center>
              <Big width={44} icon={<BrushIcon />} text="Кисти" arrow />
            </GroupBody>
          </Group>

          <Group $width={250}>
            <GroupBody $pad={5} $gap={6}>
              <ShapeBox>
                <ShapeGrid>
                  {Object.entries(shapePaths).map(([name, d]) => (
                    <CellButton type="button" key={name} aria-label={name}>
                      <Svg w={16}><path d={d} stroke="#2b6a96" fill={name === "Линия" || name === "Кривая" ? "none" : "#e6f2fb"} /></Svg>
                    </CellButton>
                  ))}
                </ShapeGrid>
                <ShapeScroll>
                  <CellButton type="button" aria-label="Вверх">
                    <Svg w={5} h={3}><path d="M0 3h5L2.500 0z" fill="#b0b0b0" /></Svg>
                  </CellButton>
                  <CellButton type="button" aria-label="Вниз"><Arrow /></CellButton>
                  <CellButton type="button" aria-label="Все фигуры">
                    <Svg w={7} h={6}><path d="M0 0h7v1H0zM1 3h5L3.500 6z" fill="#222" /></Svg>
                  </CellButton>
                </ShapeScroll>
              </ShapeBox>
              <Rows>
                <Row disabled icon={<OutlineIcon />} text="Контур" arrow />
                <Row disabled icon={<FillIcon muted />} text="Заливка" arrow />
              </Rows>
            </GroupBody>
            <GroupName>Фигуры</GroupName>
          </Group>

          <Group $width={63}>
            <GroupBody $center>
              <Big width={58} icon={<ThicknessIcon />} text="Толщина" arrow />
            </GroupBody>
          </Group>

          <Group $width={380}>
            <GroupBody $pad={4}>
              <Big width={42} icon={<Chip $size={32} $color="#000" />} text={"Цвет\n1"} $on />
              <Big width={42} icon={<Chip $size={24} $color="#fff" />} text={"Цвет\n2"} />
              <Palette>
                {colors.map((c, i) => (
                  <Swatch type="button" key={i} $color={c} aria-label={`Образец ${i + 1}`} />
                ))}
              </Palette>
              <Big width={64} icon={<FramedPicture><Spectrum /></FramedPicture>} text={"Изменение\nцветов"} />
            </GroupBody>
            <GroupName>Цвета</GroupName>
          </Group>

          <Group $width={115}>
            <GroupBody $center>
              <Big width={108} icon={<FramedPicture><Paint3DIcon /></FramedPicture>} text={"Изменить с\nпомощью Paint 3D"} />
            </GroupBody>
          </Group>

          <Group $width={86}>
            <GroupBody $center>
              <Big width={78} icon={<InfoIcon />} text={"Оповещение\nпродукта"} />
            </GroupBody>
          </Group>
        </Ribbon>

        <WorkArea>
          <Sheet>
            <Drawing />
            <Handle $left="100%" $top="calc(50% - 2px)" />
            <Handle $left="calc(50% - 2px)" $top="100%" />
            <Handle $left="100%" $top="100%" />
          </Sheet>
        </WorkArea>

        <StatusBar>
          <StatusCell $width={156}>
            <Svg w={11} h={11}>
              <path d="M5.500 0v11M0 5.500h11M4 1.500h3M4 9.500h3M1.500 4v3M9.500 4v3" stroke="#1f3c66" />
            </Svg>
          </StatusCell>
          <StatusCell $width={156}>
            <Svg w={14} h={13}>
              <rect x="4.500" y="1.500" width="8" height="7" stroke="#1f3c66" strokeDasharray="2 1" />
              <path d="M1.500 1v8M0 2.500l1.500-2 1.500 2M4 11.500h9M11 10l2 1.500-2 1.500" stroke="#1f3c66" />
            </Svg>
          </StatusCell>
          <StatusCell $width={156}>
            <Svg w={14} h={13}>
              <rect x="4.500" y="1.500" width="8" height="7" stroke="#1f3c66" />
              <path d="M1.500 1v8M0 2.500l1.500-2 1.500 2M4 11.500h9M11 10l2 1.500-2 1.500" stroke="#1f3c66" />
            </Svg>
            <span>1633 × 648пкс</span>
          </StatusCell>
          <StatusCell $width={156} />
          <Zoom>
            <span>100%</span>
            <button type="button" aria-label="Уменьшить"><RoundIcon /></button>
            <ZoomTrack type="range" min="0" max="100" defaultValue="50" aria-label="Масштаб" />
            <button type="button" aria-label="Увеличить"><RoundIcon plus /></button>
          </Zoom>
        </StatusBar>

        <Taskbar>
          <TaskButton type="button" $width={48} aria-label="Пуск"><WindowsIcon /></TaskButton>
          <TaskButton type="button" $width={48} aria-label="Поиск"><SearchIcon /></TaskButton>
          <TaskButton type="button" $width={48} aria-label="Представление задач"><TaskViewIcon /></TaskButton>
          <Search>
            <SearchInput type="text" placeholder="Голосовой помощник Алиса" aria-label="Голосовой помощник" />
            <MutedMicIcon />
          </Search>
          <TaskButton type="button" aria-label="Проводник"><ExplorerIcon /></TaskButton>
          <TaskButton type="button" aria-label="Магазин"><StoreIcon /></TaskButton>
          <TaskButton type="button" aria-label="Яндекс" $open><YandexIcon /></TaskButton>
          <TaskButton type="button" aria-label="Chrome"><ChromeIcon /></TaskButton>
          <TaskButton type="button" aria-label="Торрент" $open><TorrentIcon /></TaskButton>
          <TaskButton type="button" aria-label="Paint" $open $on><PaintIcon size={24} /></TaskButton>
          <Tray>
            <TaskButton type="button" $width={46} aria-label="Люди"><PeopleIcon /></TaskButton>
            <TaskButton type="button" $width={24} aria-label="Скрытые значки">
              <Svg w={12} h={7}><path d="M.5 6.500 6 1l5.500 5.500" stroke="#fff" strokeWidth="1.300" /></Svg>
            </TaskButton>
            <TaskButton type="button" $width={24} aria-label="Громкость"><SoundIcon /></TaskButton>
            <TaskButton type="button" $width={26} aria-label="Сеть"><NetworkIcon /></TaskButton>
            <TaskButton type="button" $width={32}><Language>ENG</Language></TaskButton>
            <Clock>
              <div>11:32</div>
              <div>12.09.2018</div>
            </Clock>
            <TaskButton type="button" $width={33} aria-label="Уведомления"><NoticeIcon /></TaskButton>
            <TrayEdge />
          </Tray>
        </Taskbar>
      </Window>
    </>
  );
}
